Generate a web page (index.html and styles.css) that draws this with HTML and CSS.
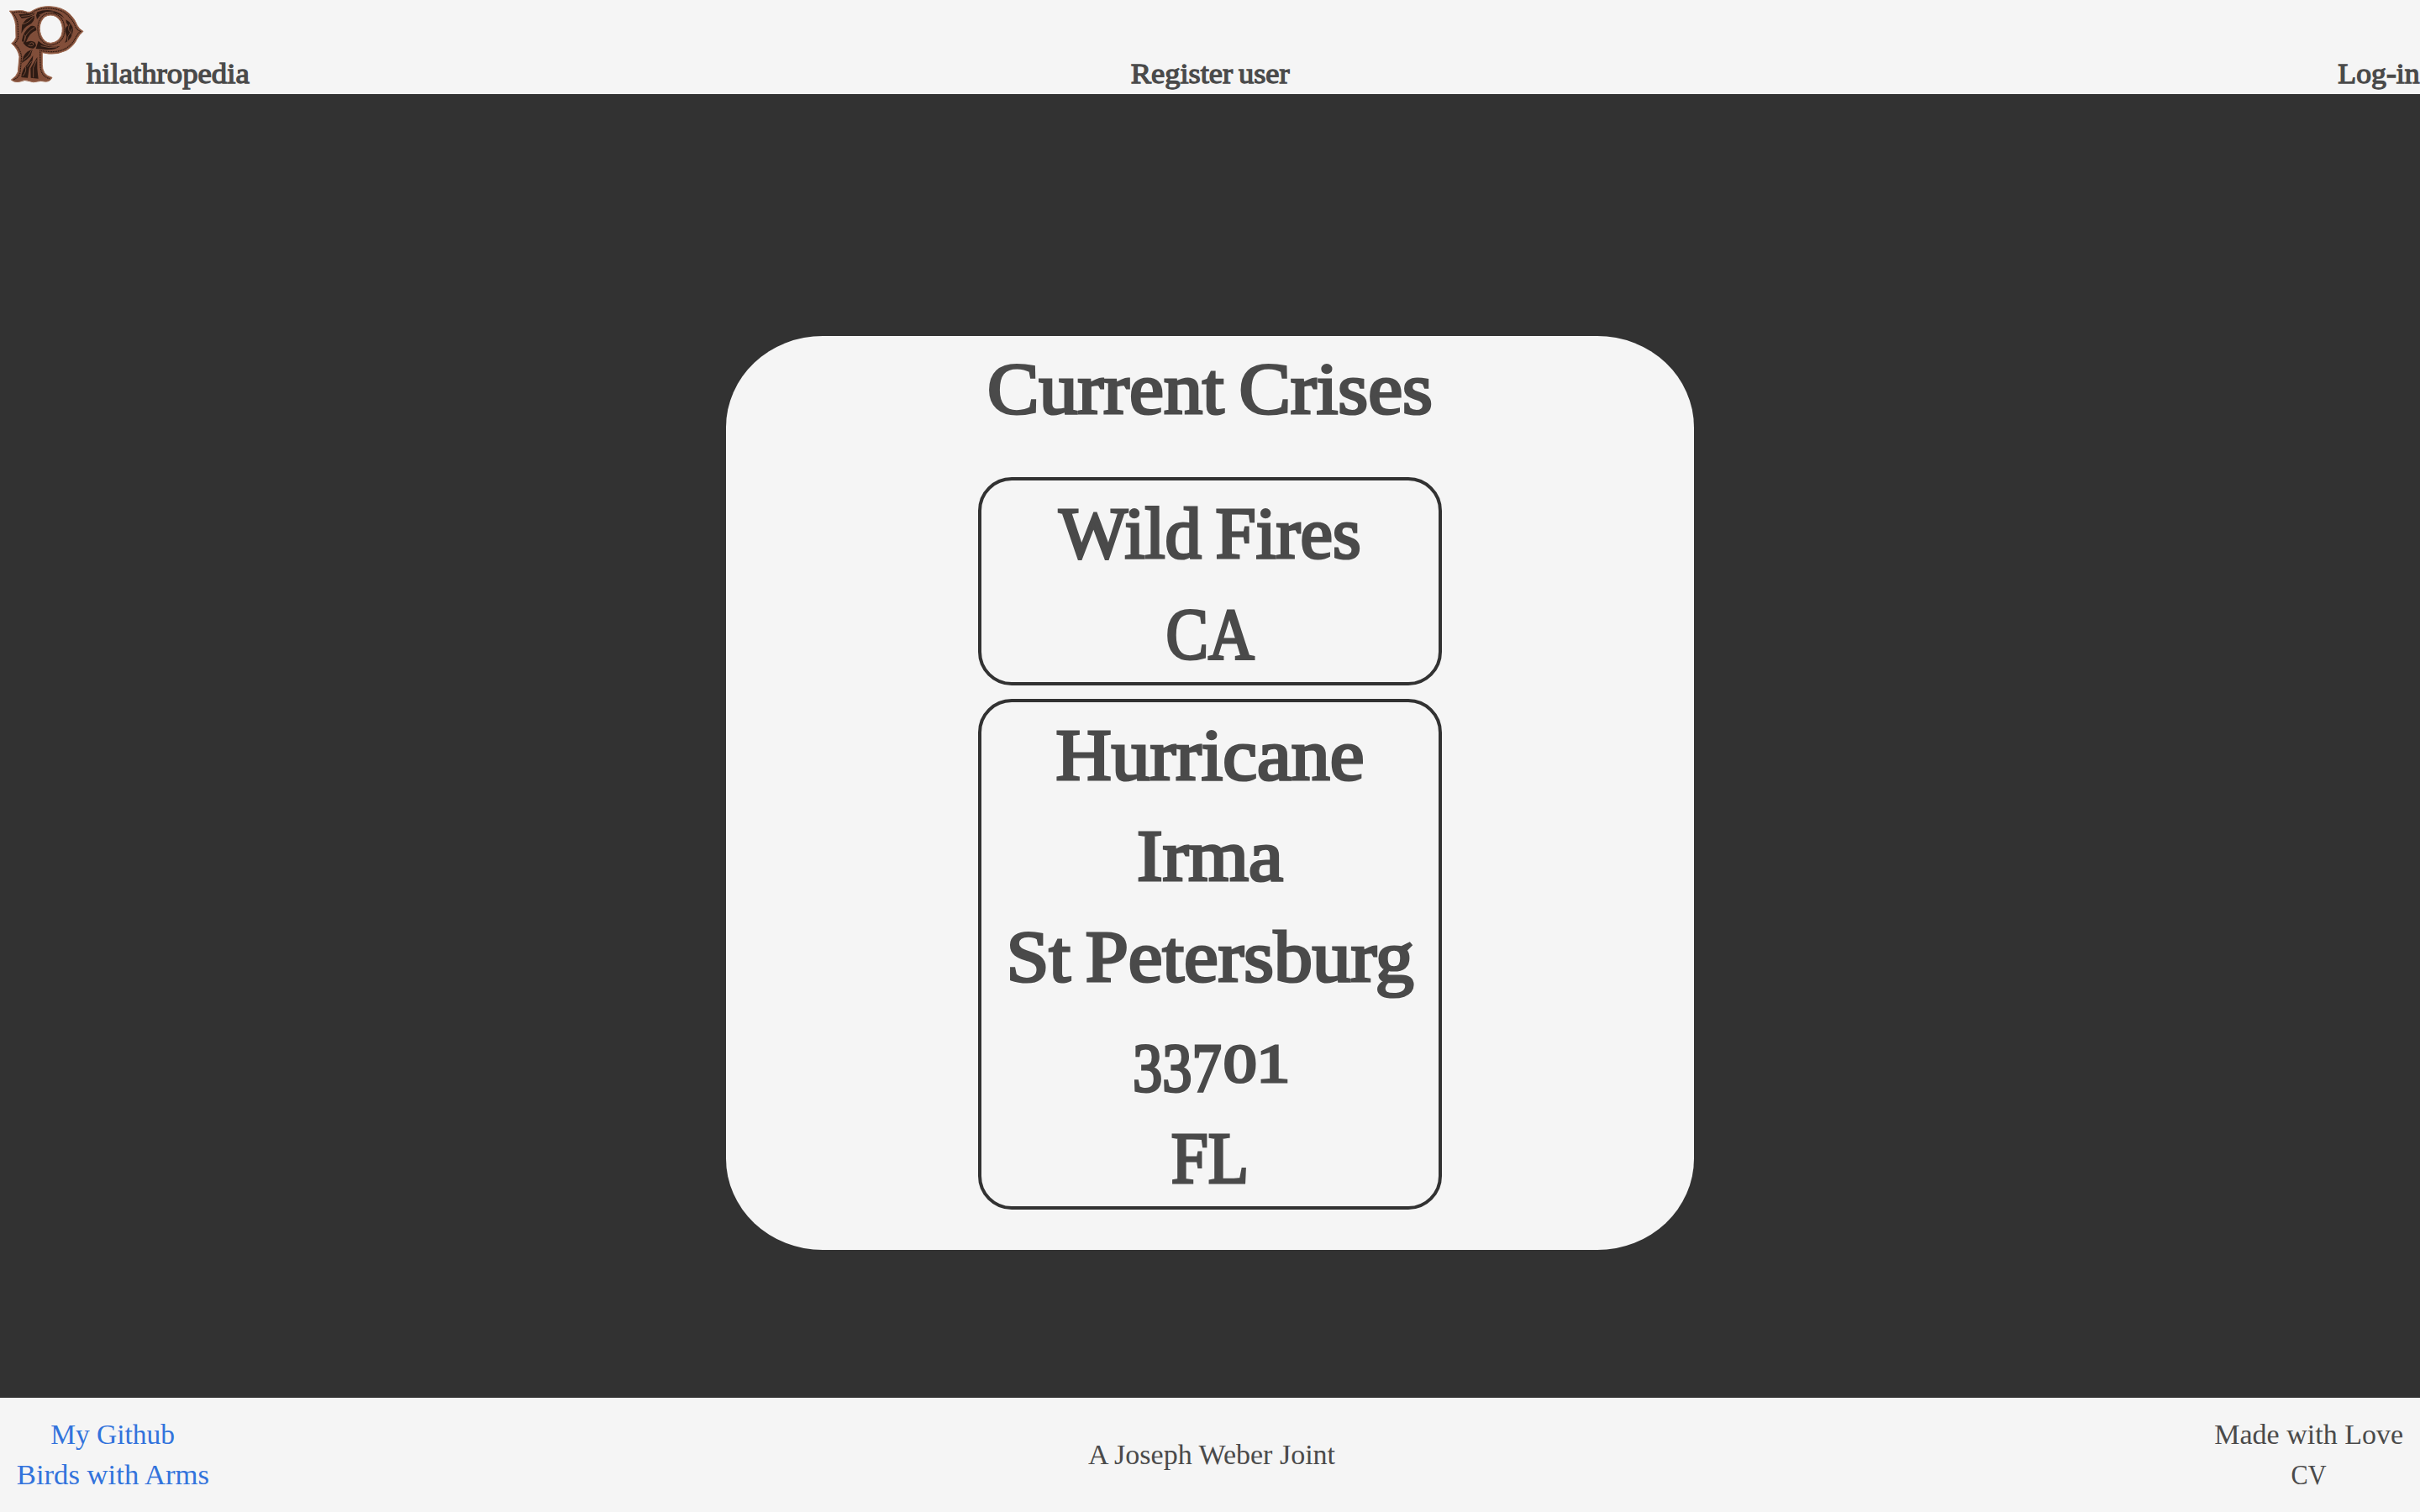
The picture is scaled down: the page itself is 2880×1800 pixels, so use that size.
FILE: index.html
```html
<!DOCTYPE html>
<html lang="en">
<head>
  <meta charset="utf-8">
  <title>Philathropedia</title>
  <link rel="stylesheet" href="styles.css">
</head>
<body>
  <header class="topbar">
    <a class="brand">
      <svg class="logo" viewBox="0 0 309 330" aria-hidden="true">
        <defs>
          <linearGradient id="leather" x1="0" y1="0" x2="1" y2="1">
            <stop offset="0" stop-color="#7c4c39"/>
            <stop offset="1" stop-color="#86503a"/>
          </linearGradient>
        </defs>
        <path fill="url(#leather)" fill-rule="evenodd" stroke="#9d6a51" stroke-width="3" stroke-linejoin="round" d="M34 39 Q48 40 62 38 Q82 36 98 43 Q107 46 120 36 Q145 22 178 23 Q222 25 248 49 Q268 69 276 91 Q282 104 297 112 Q283 124 275 139 Q264 164 237 180 Q208 195 174 192 L151 188 L151 229 Q150 247 159 261 Q168 272 186 277 Q178 294 158 291 Q147 287 134 291 Q119 296 106 290 Q88 283 73 291 Q52 296 40 285 Q59 273 64 257 L69 203 Q65 175 41 155 Q53 148 57 133 L56 91 Q53 61 34 39 Z M180 54 Q157 55 147 77 Q137 100 146 125 Q157 153 181 154 Q208 151 219 127 Q228 99 216 76 Q203 54 180 54 Z"/>
        <path fill="none" stroke="#2c1810" stroke-width="3.5" stroke-dasharray="4 2" d="M44 45 Q81 38 101 50 Q115 48 126 38 Q152 27 182 30 Q222 34 243 56 Q263 76 270 97 Q274 106 287 112 Q275 123 268 138 Q255 162 234 173 Q206 188 170 184 L143 181 L144 236 Q145 255 155 268 Q163 277 177 281 M49 284 Q67 278 72 259 L77 203 Q73 174 51 156 Q62 148 65 134 L64 88 Q61 63 44 45 M180 47 Q151 47 139 77 Q130 104 140 131 Q155 160 182 161 Q214 157 227 130 Q236 98 223 71 Q208 47 180 47"/>
        <path fill="#2d1a13" d="M67 51 Q98 50 126 49 Q101 66 77 65 Z M79 87 Q93 63 123 56 Q125 78 103 89 Q87 96 76 120 Z M78 145 Q82 113 110 93 Q130 90 130 108 Q105 116 93 151 Q112 141 124 151 Q136 165 119 173 Q91 174 78 145 Z M83 203 Q96 179 116 178 L109 200 Q98 212 78 225 Z M76 276 Q78 247 97 230 L118 198 Q118 221 104 243 Q101 267 99 278 Z M110 278 L109 244 L133 204 L133 244 Q135 267 137 281 Z M133 43 Q161 33 187 38 Q216 43 230 65 Q207 46 174 42 Q150 42 132 69 L129 55 Z M235 70 Q258 83 261 106 Q258 142 231 153 Q242 136 235 119 Q228 100 243 91 Q234 81 235 70 Z M137 146 Q168 175 215 164 Q193 181 159 177 L128 174 Z"/>
        <path fill="none" stroke="#85543f" stroke-width="2.5" stroke-linecap="round" d="M77 58 Q99 58 116 52 M81 86 Q104 82 119 60 M87 141 Q92 117 123 98 M82 153 Q95 139 89 126 M101 162 Q122 169 119 154 Q111 149 106 156 M83 215 Q102 202 112 181 M82 271 Q98 252 90 238 M119 276 L119 242 L130 216 M97 238 L112 220 M142 53 Q165 40 190 42 M249 86 Q239 104 251 116 Q239 131 241 146 M258 103 Q249 109 256 124 M147 164 Q176 174 203 168"/>
      </svg>
      <span class="nav-text brand-name">hilathropedia</span>
    </a>
    <a class="nav-text register">Register user</a>
    <a class="nav-text login">Log-in</a>
  </header>

  <main class="stage">
    <section class="card">
      <h1 class="line title">Current Crises</h1>
      <article class="crisis">
        <p class="line wild">Wild Fires</p>
        <p class="line ca">CA</p>
      </article>
      <article class="crisis">
        <p class="line hurricane">Hurricane</p>
        <p class="line irma">Irma</p>
        <p class="line city">St Petersburg</p>
        <p class="line zip"><span class="low">337</span><span class="short">01</span></p>
        <p class="line fl">FL</p>
      </article>
    </section>
  </main>

  <footer class="footer">
    <div class="foot-left">
      <a class="link github">My Github</a>
      <a class="link birds">Birds with Arms</a>
    </div>
    <p class="foot-center">A Joseph Weber Joint</p>
    <div class="foot-right">
      <span class="made">Made with Love</span>
      <span class="cv">CV</span>
    </div>
  </footer>
</body>
</html>
```
FILE: styles.css
```css
* {
  box-sizing: border-box;
}

body {
  display: flex;
  flex-direction: column;
  height: 1800px;
  margin: 0;
  overflow: hidden;
  background: #323232;
  color: #4a4a4a;
  font-family: "Liberation Serif", serif;
  font-size: 34px;
  line-height: 48px;
}

h1,
p {
  margin: 0;
  font-weight: 400;
}

/* Top bar */
.topbar {
  display: grid;
  grid-template-columns: 1fr auto 1fr;
  align-items: end;
  height: 112px;
  background: #f5f5f5;
}

.brand {
  display: flex;
  align-items: flex-end;
}

.logo {
  display: block;
  width: 103px;
  height: 110px;
  margin-bottom: 2px;
}

.nav-text {
  white-space: nowrap;
  -webkit-text-stroke: 1.3px #4a4a4a;
}

.brand-name {
  transform: scaleX(1.08);
  transform-origin: left;
}

.register {
  word-spacing: -2px;
  transform: scaleX(1.07);
}

.login {
  justify-self: end;
  transform: scaleX(1.05);
  transform-origin: right;
}

/* Crisis card */
.stage {
  flex: 1;
  padding-top: 288px;
}

.card {
  display: flex;
  flex-direction: column;
  align-items: center;
  gap: 16px;
  width: 1152px;
  height: 1088px;
  margin: 0 auto;
  border-radius: 10%;
  background: #f5f5f5;
}

.line {
  height: 120px;
  padding-top: 3px;
  font-size: 87px;
  line-height: 120px;
  text-align: center;
  white-space: nowrap;
  word-spacing: -5px;
  -webkit-text-stroke: 3.2px #4a4a4a;
}

.title {
  margin-bottom: 32px;
  transform: scaleX(1.06);
}

.crisis {
  width: 552px;
  border: 4px solid #323232;
  border-radius: 40px;
}

.wild {
  transform: scaleX(0.995);
}

.ca {
  transform: scaleX(0.87);
}

.hurricane {
  transform: scaleX(1.055);
}

.irma {
  transform: scaleX(1.06);
}

.city {
  transform: scaleX(1.055);
}

.fl {
  transform: scaleX(0.91);
}

/* Old-style figures: 3 and 7 hang below the baseline, 0 and 1 are x-height */
.low,
.short {
  display: inline-block;
  line-height: 1px;
  text-align: left;
  transform-origin: left;
}

.low {
  width: 108px;
  font-size: 82px;
  vertical-align: -11px;
  transform: scaleX(0.86);
}

.short {
  width: 76px;
  font-size: 66px;
  transform: scaleX(1.2);
}

/* Footer */
.footer {
  display: grid;
  grid-template-columns: 1fr auto 1fr;
  align-items: center;
  height: 136px;
  padding: 0 20px 0 22px;
  background: #f5f5f5;
}

.foot-left,
.foot-right {
  display: flex;
  flex-direction: column;
  align-items: center;
}

.foot-left {
  justify-self: start;
}

.foot-right {
  justify-self: end;
}

.link {
  color: #3273dc;
}

.github {
  transform: scaleX(0.985);
}

.birds {
  transform: scaleX(1.02);
}

.foot-center {
  padding-left: 2px;
}

.cv {
  transform: scaleX(0.89);
}
```
